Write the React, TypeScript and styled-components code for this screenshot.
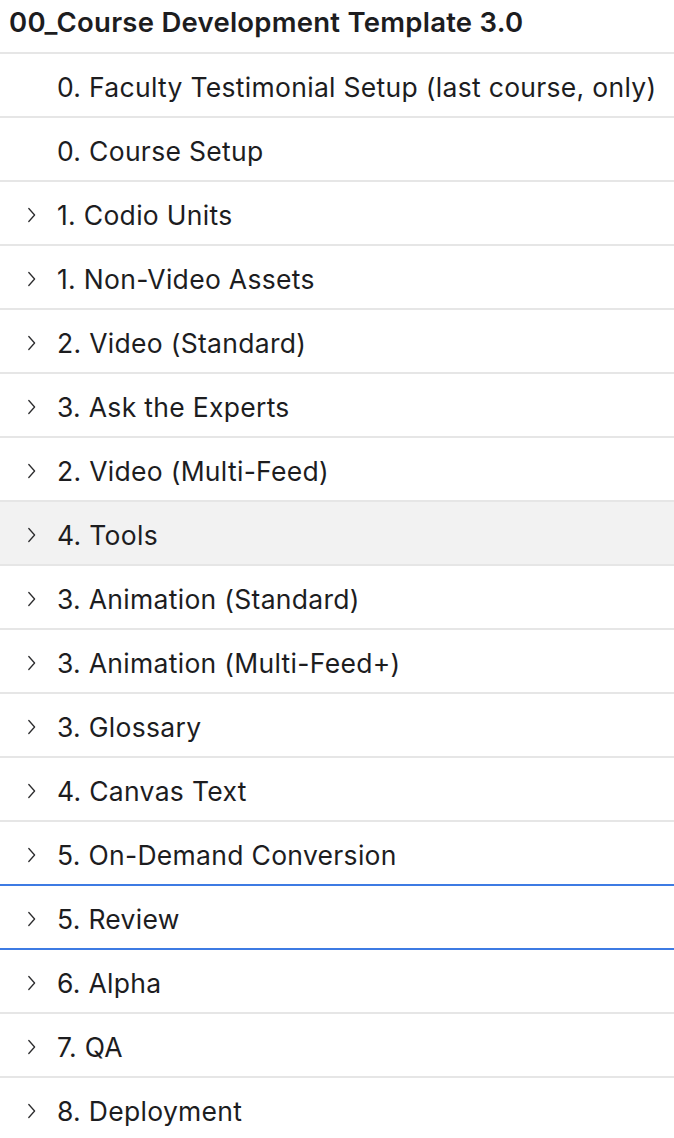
import React from 'react';
import styled, { createGlobalStyle } from 'styled-components';

const GlobalStyle = createGlobalStyle`
  html, body {
    margin: 0;
    padding: 0;
    background: #ffffff;
  }
  body {
    font-family: Inter, "Noto Sans", "Liberation Sans", sans-serif;
    color: #1d1d1f;
  }
`;

interface Item {
  label: string;
  expandable: boolean;
}

const items: Item[] = [
  { label: '0. Faculty Testimonial Setup (last course, only)', expandable: false },
  { label: '0. Course Setup', expandable: false },
  { label: '1. Codio Units', expandable: true },
  { label: '1. Non-Video Assets', expandable: true },
  { label: '2. Video (Standard)', expandable: true },
  { label: '3. Ask the Experts', expandable: true },
  { label: '2. Video (Multi-Feed)', expandable: true },
  { label: '4. Tools', expandable: true },
  { label: '3. Animation (Standard)', expandable: true },
  { label: '3. Animation (Multi-Feed+)', expandable: true },
  { label: '3. Glossary', expandable: true },
  { label: '4. Canvas Text', expandable: true },
  { label: '5. On-Demand Conversion', expandable: true },
  { label: '5. Review', expandable: true },
  { label: '6. Alpha', expandable: true },
  { label: '7. QA', expandable: true },
  { label: '8. Deployment', expandable: true },
];

const HOVERED = '4. Tools';
const DROP_TARGETS = ['5. On-Demand Conversion', '5. Review'];

const Panel = styled.div`
  width: 674px;
  display: flex;
  flex-direction: column;
`;

const Header = styled.div`
  height: 54px;
  display: flex;
  align-items: center;
  padding: 0 0 8px 9px;
  box-sizing: border-box;
  border-bottom: 2px solid #e6e6e6;
  font-size: 27.5px;
  font-weight: 600;
  letter-spacing: 0.25px;
  white-space: nowrap;
  color: #1d1d1f;
`;

const Row = styled.div<{ $hovered?: boolean; $dropTarget?: boolean }>`
  height: 64px;
  box-sizing: border-box;
  display: flex;
  align-items: center;
  padding: 4px 0 0 26px;
  border-bottom: 2px solid ${(p) => (p.$dropTarget ? '#3d7be3' : '#e6e6e6')};
  background: ${(p) => (p.$hovered ? '#f2f2f2' : '#ffffff')};
`;

const ChevronSlot = styled.span`
  width: 31px;
  display: flex;
  align-items: center;
  color: #2c2c2e;
`;

const Label = styled.span`
  font-size: 26.5px;
  font-weight: 400;
  letter-spacing: 0.3px;
  white-space: nowrap;
  color: #1d1d1f;
`;

const Chevron = () => (
  <svg width="11" height="18" viewBox="0 0 11 18" fill="none">
    <path d="M2.8 2.5 L8.6 9 L2.8 15.5" stroke="currentColor" strokeWidth="1.3" strokeLinecap="round" strokeLinejoin="round" />
  </svg>
);

export default function App() {
  return (
    <>
      <GlobalStyle />
      <Panel>
        <Header>00_Course Development Template 3.0</Header>
        {items.map((item) => (
          <Row
            key={item.label}
            $hovered={item.label === HOVERED}
            $dropTarget={DROP_TARGETS.includes(item.label)}
          >
            <ChevronSlot>{item.expandable && <Chevron />}</ChevronSlot>
            <Label>{item.label}</Label>
          </Row>
        ))}
      </Panel>
    </>
  );
}
